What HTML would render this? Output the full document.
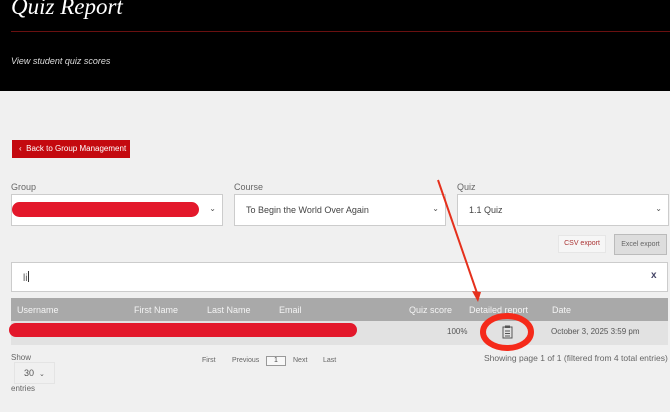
<!DOCTYPE html>
<html><head><style>
*{margin:0;padding:0;box-sizing:border-box}
body{width:670px;height:412px;overflow:hidden;background:#f0f0f0;font-family:"Liberation Sans",sans-serif;position:relative;color:#555}
.a{position:absolute;white-space:nowrap}
.sel{position:absolute;background:#fff;border:1px solid #ccc;height:32px;top:194px}
.sel span{position:absolute;left:11px;top:10px;font-size:9px;color:#444}
.sel i{position:absolute;right:6px;top:9px;font-size:8px;font-style:normal;color:#555}
.lbl{position:absolute;top:182px;font-size:9px;color:#666}
.th{position:absolute;top:305px;font-size:9px;color:#f4f4f4}
.pg{position:absolute;top:357px;font-size:7px;color:#666}
</style></head><body>
<div class="a" style="left:0;top:0;width:670px;height:91px;background:#000"></div>
<div class="a" style="left:11px;top:-6px;font-family:'Liberation Serif',serif;font-style:italic;font-size:23px;color:#fff">Quiz Report</div>
<div class="a" style="left:11px;top:31px;width:659px;height:1px;background:#6a1010"></div>
<div class="a" style="left:11px;top:56px;font-style:italic;font-size:9px;color:#ddd">View student quiz scores</div>

<div class="a" style="left:12px;top:140px;width:118px;height:18px;background:#c4090f;color:#fff;font-size:8px;line-height:18px;padding-left:7px">‹&nbsp; Back to Group Management</div>

<div class="lbl" style="left:11px">Group</div>
<div class="lbl" style="left:234px">Course</div>
<div class="lbl" style="left:457px">Quiz</div>
<div class="sel" style="left:11px;width:212px"><i>⌄</i></div>
<div class="a" style="left:12px;top:202px;width:187px;height:15px;border-radius:8px;background:#e3182b"></div>
<div class="sel" style="left:234px;width:212px"><span>To Begin the World Over Again</span><i>⌄</i></div>
<div class="sel" style="left:457px;width:212px"><span>1.1 Quiz</span><i>⌄</i></div>

<div class="a" style="left:558px;top:235px;width:48px;height:18px;background:#f6f6f6;border:1px solid #e6e6e6;font-size:7px;color:#a33;line-height:16px;text-align:center">CSV export</div>
<div class="a" style="left:614px;top:234px;width:53px;height:21px;background:#ddd;border:1px solid #bbb;font-size:7px;color:#666;line-height:19px;text-align:center">Excel export</div>

<div class="a" style="left:11px;top:262px;width:657px;height:30px;background:#fff;border:1px solid #ccc"></div>
<div class="a" style="left:23px;top:271px;font-size:10px;color:#555">li<span style="display:inline-block;width:1px;height:11px;background:#333;vertical-align:-1px;margin-left:1px"></span></div>
<div class="a" style="left:651px;top:270px;font-size:10px;color:#446;font-weight:bold">x</div>

<div class="a" style="left:11px;top:298px;width:657px;height:23px;background:#a9a9a9"></div>
<div class="a" style="left:11px;top:321px;width:657px;height:24px;background:#e2e2e2"></div>
<div class="th" style="left:17px">Username</div>
<div class="th" style="left:134px">First Name</div>
<div class="th" style="left:207px">Last Name</div>
<div class="th" style="left:279px">Email</div>
<div class="th" style="left:409px">Quiz score</div>
<div class="th" style="left:469px">Detailed report</div>
<div class="th" style="left:552px">Date</div>
<div class="a" style="left:9px;top:323px;width:348px;height:14px;border-radius:7px;background:#e3182b"></div>
<div class="a" style="left:447px;top:327px;font-size:8px;color:#555">100%</div>
<div class="a" style="left:551px;top:327px;font-size:8px;color:#555">October 3, 2025 3:59 pm</div>
<svg class="a" style="left:0;top:0" width="670" height="412">
<line x1="438" y1="180" x2="477" y2="293" stroke="#e5301c" stroke-width="2"/>
<polygon points="472,291 481,292 478,302" fill="#e5301c"/>
<ellipse cx="507" cy="332" rx="24" ry="16" fill="none" stroke="#f52a1a" stroke-width="6"/>
<rect x="503" y="327" width="9" height="11" fill="none" stroke="#555" stroke-width="1"/>
<rect x="505" y="325.5" width="5" height="2.5" fill="#555"/>
<line x1="505" y1="331" x2="510" y2="331" stroke="#555"/><line x1="505" y1="333.5" x2="510" y2="333.5" stroke="#555"/><line x1="505" y1="336" x2="510" y2="336" stroke="#555"/>
</svg>

<div class="a" style="left:11px;top:353px;font-size:8px;color:#666">Show</div>
<div class="a" style="left:14px;top:362px;width:41px;height:22px;border:1px solid #e4e4e4;font-size:9px;color:#555;padding:5px 0 0 9px">30 &nbsp;<span style="font-size:7px">⌄</span></div>
<div class="a" style="left:11px;top:384px;font-size:8px;color:#666">entries</div>
<div class="pg" style="left:202px">First</div>
<div class="pg" style="left:232px">Previous</div>
<div class="a" style="left:266px;top:356px;width:20px;height:10px;border:1px solid #999;background:#f8f8f8;font-size:7px;text-align:center;line-height:8px;color:#444">1</div>
<div class="pg" style="left:293px">Next</div>
<div class="pg" style="left:323px">Last</div>
<div class="a" style="left:484px;top:353px;font-size:8.5px;color:#666">Showing page 1 of 1 (filtered from 4 total entries)</div>
</body></html>
